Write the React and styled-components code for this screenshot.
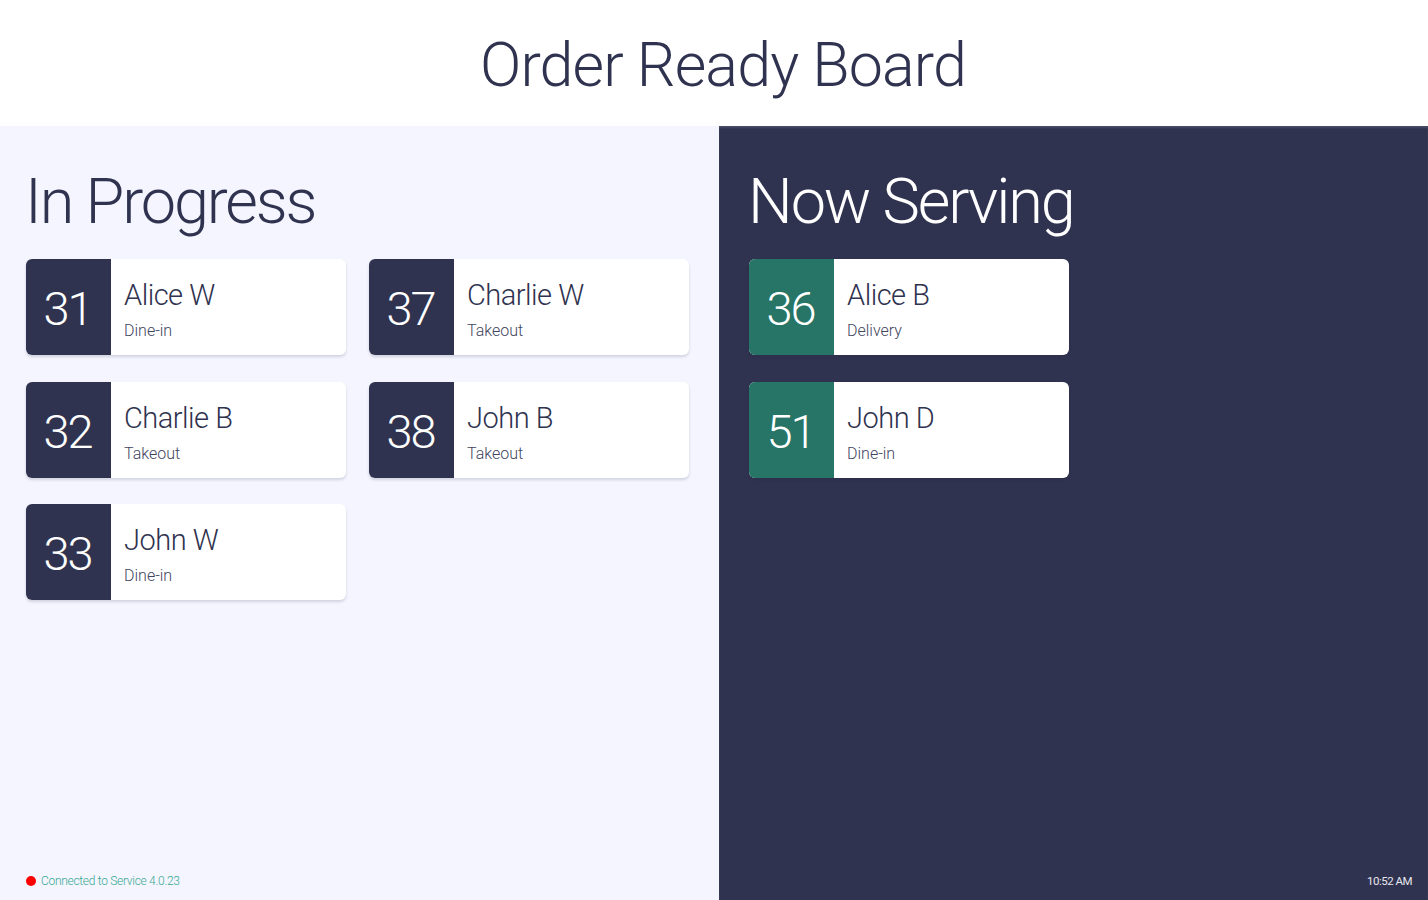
import React from "react";
import styled, { createGlobalStyle } from "styled-components";

const Global = createGlobalStyle`
  html, body { margin: 0; padding: 0; height: 100%; }
  body { font-family: Roboto, "Noto Sans", sans-serif; color: #30334f; }
  #root { height: 100%; }
  * { box-sizing: border-box; }
`;

const Page = styled.div`
  height: 900px;
  display: grid;
  grid-template-rows: 126px 1fr;
`;

const Header = styled.header`
  background: #ffffff;
  display: flex;
  align-items: center;
  justify-content: center;
  padding: 4px 0 0 18px;
`;

const HeaderTitle = styled.h1`
  margin: 0;
  font-size: 61px;
  font-weight: 300;
  letter-spacing: -0.9px;
  color: #30334f;
`;

const Main = styled.main`
  display: grid;
  grid-template-columns: 719px 1fr;
  min-height: 0;
`;

const Panel = styled.section`
  position: relative;
  background: ${(p) => (p.$dark ? "#30334f" : "#f4f5fe")};
  padding: 36px 0 0 ${(p) => (p.$dark ? "30px" : "26px")};
  display: flex;
  flex-direction: column;
  box-shadow: ${(p) => (p.$dark ? "inset 0 2px 2px rgba(255,255,255,0.12)" : "none")};
`;

const PanelTitle = styled.h2`
  margin: 0 0 18px -1px;
  font-size: 63px;
  line-height: 79px;
  font-weight: 300;
  letter-spacing: -2.1px;
  color: ${(p) => (p.$dark ? "#ffffff" : "#30334f")};
`;

const Grid = styled.div`
  display: grid;
  grid-template-rows: repeat(3, 96px);
  grid-auto-flow: column;
  grid-auto-columns: 320px;
  column-gap: 23px;
  row-gap: 26.5px;
`;

const Card = styled.div`
  display: flex;
  height: 96px;
  background: #ffffff;
  border-radius: 6px;
  overflow: hidden;
  box-shadow: 0 2px 3px rgba(30, 33, 70, 0.16);
`;

const Number = styled.div`
  width: 85px;
  flex: none;
  background: ${(p) => (p.$ready ? "#267566" : "#30334f")};
  color: #ffffff;
  display: flex;
  align-items: center;
  justify-content: center;
  font-size: 47px;
  font-weight: 300;
  letter-spacing: -2px;
  padding: 3px 2px 0 0;
`;

const Info = styled.div`
  display: flex;
  flex-direction: column;
  justify-content: center;
  padding: 5px 0 0 13px;
`;

const Name = styled.div`
  font-size: 29px;
  font-weight: 300;
  letter-spacing: -0.5px;
  color: #30334f;
  line-height: 34px;
`;

const Kind = styled.div`
  font-size: 16px;
  font-weight: 300;
  color: #41445e;
  margin-top: 9px;
  line-height: 20px;
`;

const Status = styled.div`
  position: absolute;
  left: 26px;
  bottom: 12px;
  display: flex;
  align-items: center;
  gap: 5px;
  font-size: 12px;
  font-weight: 300;
  color: #3aa894;
  letter-spacing: -0.3px;
`;

const Dot = styled.span`
  width: 10px;
  height: 10px;
  border-radius: 50%;
  background: #ff0000;
`;

const Clock = styled.div`
  position: absolute;
  right: 16px;
  bottom: 12px;
  font-size: 11.5px;
  font-weight: 400;
  color: #e6e7f0;
  letter-spacing: -0.5px;
`;

const inProgress = [
  { n: 31, name: "Alice W", kind: "Dine-in" },
  { n: 32, name: "Charlie B", kind: "Takeout" },
  { n: 33, name: "John W", kind: "Dine-in" },
  { n: 37, name: "Charlie W", kind: "Takeout" },
  { n: 38, name: "John B", kind: "Takeout" },
];

const serving = [
  { n: 36, name: "Alice B", kind: "Delivery" },
  { n: 51, name: "John D", kind: "Dine-in" },
];

function OrderCard({ o, ready }) {
  return (
    <Card>
      <Number $ready={ready}>{o.n}</Number>
      <Info>
        <Name>{o.name}</Name>
        <Kind>{o.kind}</Kind>
      </Info>
    </Card>
  );
}

export default function App() {
  return (
    <>
      <Global />
      <Page>
        <Header>
          <HeaderTitle>Order Ready Board</HeaderTitle>
        </Header>
        <Main>
          <Panel>
            <PanelTitle>In Progress</PanelTitle>
            <Grid>
              {inProgress.map((o) => (
                <OrderCard key={o.n} o={o} />
              ))}
            </Grid>
            <Status>
              <Dot />
              Connected to Service 4.0.23
            </Status>
          </Panel>
          <Panel $dark>
            <PanelTitle $dark>Now Serving</PanelTitle>
            <Grid>
              {serving.map((o) => (
                <OrderCard key={o.n} o={o} ready />
              ))}
            </Grid>
            <Clock>10:52 AM</Clock>
          </Panel>
        </Main>
      </Page>
    </>
  );
}
